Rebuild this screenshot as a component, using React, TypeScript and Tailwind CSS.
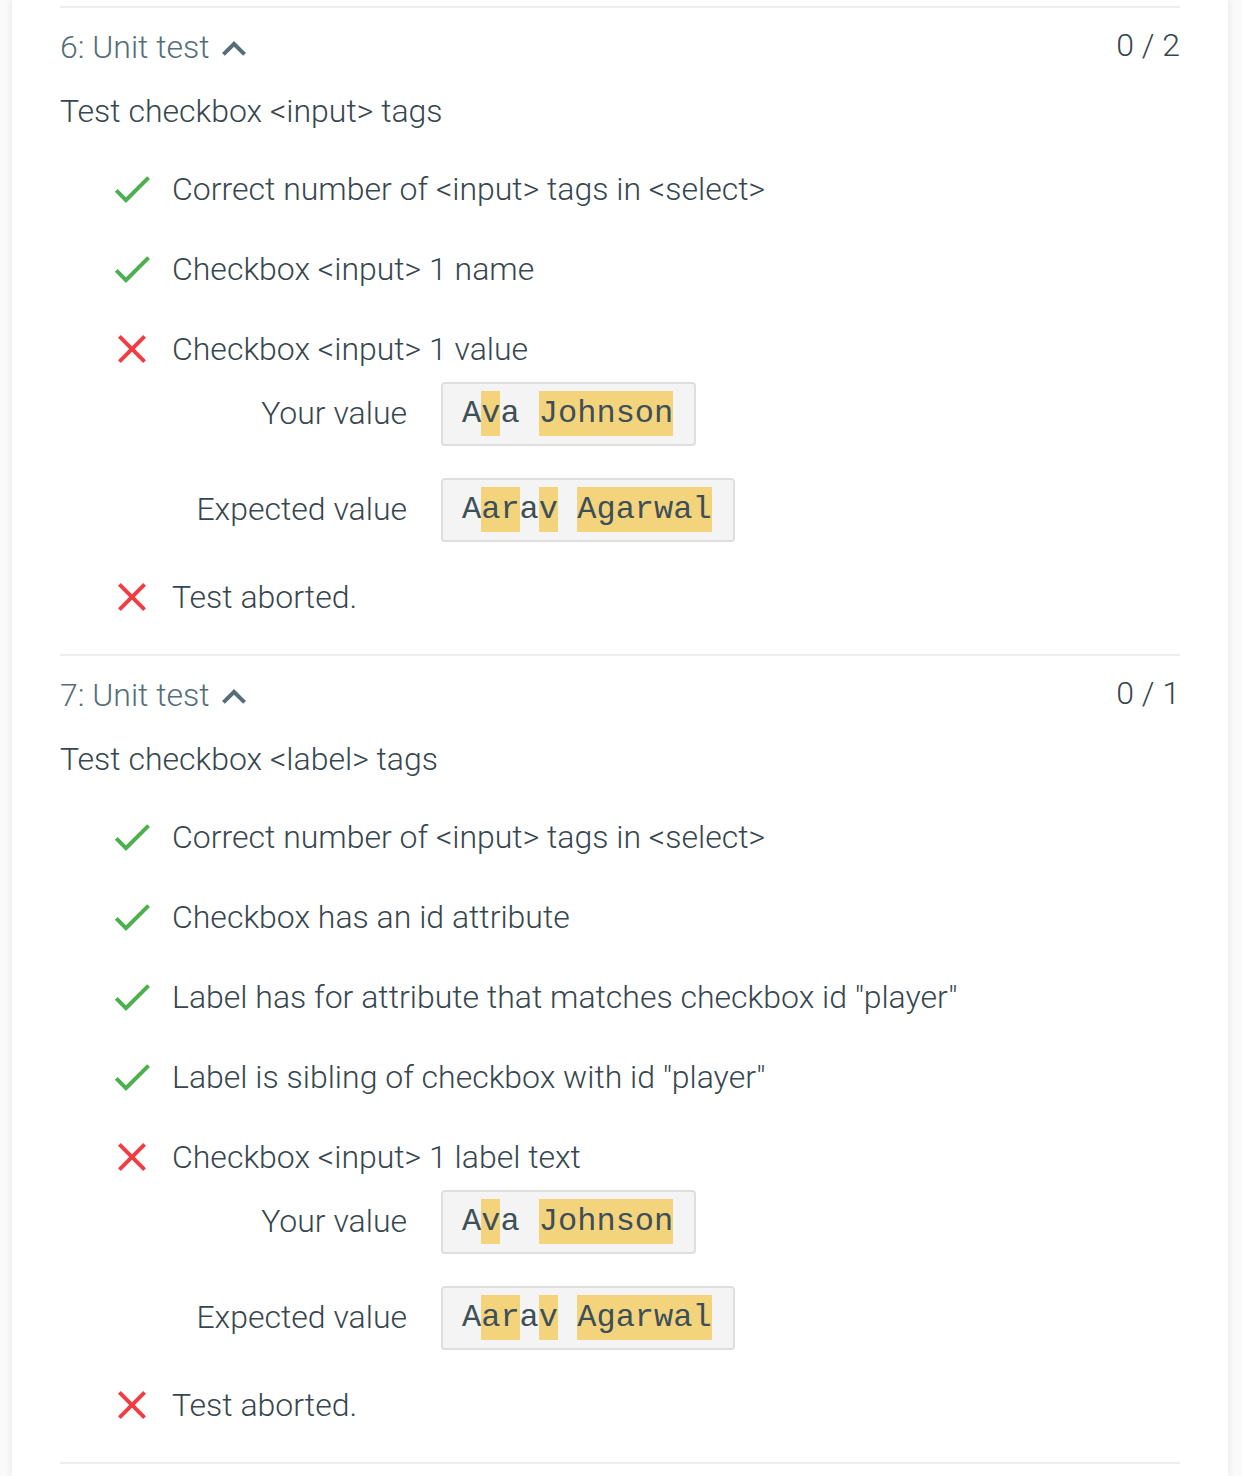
import React from "react";

const CheckIcon = () => (
  <svg width="48" height="48" viewBox="0 0 24 24" className="shrink-0">
    <path fill="#4caf50" d="M9 16.17L4.83 12l-1.42 1.41L9 19 21 7l-1.41-1.41z" />
  </svg>
);

const CrossIcon = () => (
  <svg width="48" height="48" viewBox="0 0 24 24" className="shrink-0">
    <path
      fill="#f23c44"
      d="M19 6.41L17.59 5 12 10.59 6.41 5 5 6.41 10.59 12 5 17.59 6.41 19 12 13.41 17.59 19 19 17.59 13.41 12z"
    />
  </svg>
);

const ChevronUp = () => (
  <svg width="48" height="48" viewBox="0 0 24 24" className="shrink-0 -ml-[12px] translate-y-[2px]">
    <path fill="#546e7a" d="M12 8l-6 6 1.41 1.41L12 10.83l4.59 4.58L18 14z" />
  </svg>
);

type Seg = { t: string; h?: boolean };

const H = ({ children }: { children: React.ReactNode }) => (
  <span className="bg-[#f3d47c] py-[4px]">{children}</span>
);

const ValueBox = ({ segs }: { segs: Seg[] }) => (
  <div className="h-[64px] flex items-center pl-[19px] pr-[21px] bg-[#f4f4f4] border-2 border-[#dedede] rounded-[4px]">
    <span
      className="text-[32px] text-[#3d4f58] whitespace-pre leading-[36px]"
      style={{ fontFamily: '"Courier New", Courier, "Liberation Mono", monospace' }}
    >
      {segs.map((s, i) => (s.h ? <H key={i}>{s.t}</H> : <span key={i}>{s.t}</span>))}
    </span>
  </div>
);

const Row = ({ ok, text, first }: { ok: boolean; text: string; first?: boolean }) => (
  <div className={`flex items-center h-[40px] pl-[48px] ${first ? "mt-[38px]" : "mt-[40px]"}`}>
    {ok ? <CheckIcon /> : <CrossIcon />}
    <span className="ml-[16px] leading-[40px] whitespace-nowrap">{text}</span>
  </div>
);

const Details = () => (
  <div className="mt-[13px] ml-[113px] grid grid-cols-[234px_auto] gap-x-[34px] gap-y-[32px] items-center justify-start">
    <div className="text-right leading-[40px] -translate-y-[1px]">Your value</div>
    <div className="justify-self-start">
      <ValueBox segs={[{ t: "A" }, { t: "v", h: true }, { t: "a " }, { t: "Johnson", h: true }]} />
    </div>
    <div className="text-right leading-[40px] -translate-y-[1px]">Expected value</div>
    <div className="justify-self-start">
      <ValueBox
        segs={[
          { t: "A" },
          { t: "ar", h: true },
          { t: "a" },
          { t: "v", h: true },
          { t: " " },
          { t: "Agarwal", h: true },
        ]}
      />
    </div>
  </div>
);

const Aborted = () => (
  <div className="flex items-center h-[40px] pl-[48px] mt-[35px]">
    <CrossIcon />
    <span className="ml-[16px] leading-[40px]">Test aborted.</span>
  </div>
);

const Section = ({
  num,
  score,
  desc,
  passed,
  failed,
}: {
  num: number;
  score: string;
  desc: string;
  passed: string[];
  failed: string;
}) => (
  <div className="border-t-2 border-[#ededed] pt-[19px] pb-[37px]">
    <div className="flex items-center justify-between h-[40px]">
      <div className="flex items-center text-[#546e7a] leading-[40px]">
        <span>{num}: Unit test</span>
        <span className="ml-[12px] flex items-center">
          <ChevronUp />
        </span>
      </div>
      <div className="text-[#37474f] leading-[40px] -translate-y-[2px]">{score}</div>
    </div>
    <div className="mt-[24px] leading-[40px]">{desc}</div>
    {passed.map((p, i) => (
      <Row key={i} ok text={p} first={i === 0} />
    ))}
    <Row ok={false} text={failed} />
    <Details />
    <Aborted />
  </div>
);

export default function App() {
  return (
    <div className="min-h-screen bg-[#fafafa] pl-[12px] pr-[14px]">
      <div
        className="bg-white px-[48px] pt-[6px] min-h-[1476px] shadow-[0_0_8px_rgba(0,0,0,0.10)] text-[32px] font-light text-[#37474f]"
        style={{ fontFamily: 'Roboto, "Noto Sans", sans-serif' }}
      >
        <Section
          num={6}
          score="0 / 2"
          desc="Test checkbox <input> tags"
          passed={["Correct number of <input> tags in <select>", "Checkbox <input> 1 name"]}
          failed="Checkbox <input> 1 value"
        />
        <Section
          num={7}
          score="0 / 1"
          desc="Test checkbox <label> tags"
          passed={[
            "Correct number of <input> tags in <select>",
            "Checkbox has an id attribute",
            'Label has for attribute that matches checkbox id "player"',
            'Label is sibling of checkbox with id "player"',
          ]}
          failed="Checkbox <input> 1 label text"
        />
        <div className="border-t-2 border-[#ededed]" />
      </div>
    </div>
  );
}
